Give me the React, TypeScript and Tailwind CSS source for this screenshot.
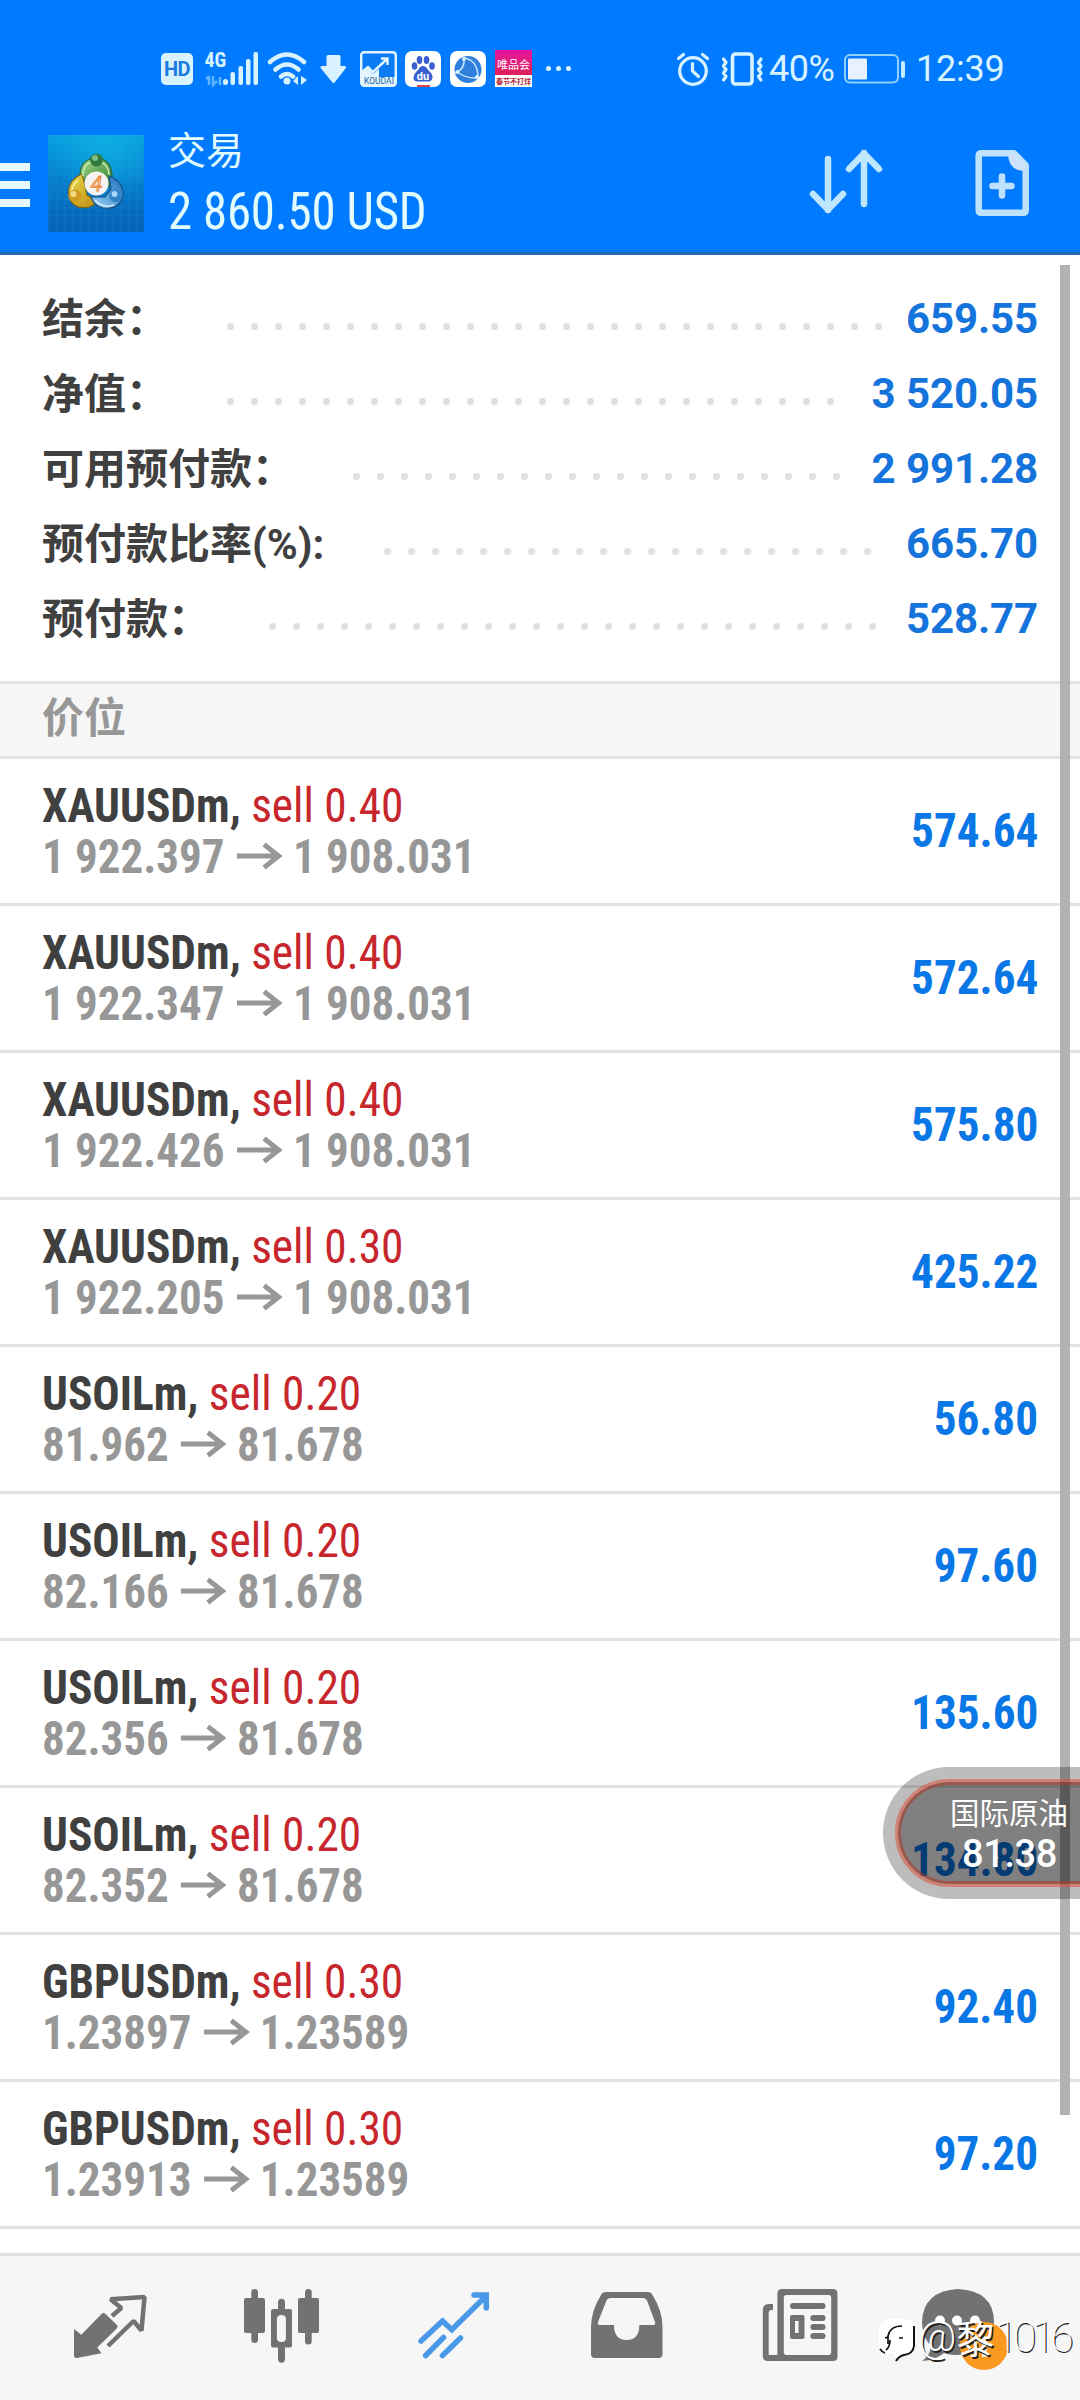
import type { ReactNode } from "react";

const summary = [
  { label: "结余：", value: "659.55", dots: 28, labelClass: "w-[185px]" },
  { label: "净值：", value: "3 520.05", dots: 26, labelClass: "w-[185px]" },
  { label: "可用预付款：", value: "2 991.28", dots: 21, labelClass: "w-[311px]" },
  { label: "预付款比率(%):", value: "665.70", dots: 21, labelClass: "w-[342px]" },
  { label: "预付款：", value: "528.77", dots: 26, labelClass: "w-[227px]" },
];

const positions = [
  { symbol: "XAUUSDm", volume: "0.40", open: "1 922.397", current: "1 908.031", profit: "574.64" },
  { symbol: "XAUUSDm", volume: "0.40", open: "1 922.347", current: "1 908.031", profit: "572.64" },
  { symbol: "XAUUSDm", volume: "0.40", open: "1 922.426", current: "1 908.031", profit: "575.80" },
  { symbol: "XAUUSDm", volume: "0.30", open: "1 922.205", current: "1 908.031", profit: "425.22" },
  { symbol: "USOILm", volume: "0.20", open: "81.962", current: "81.678", profit: "56.80" },
  { symbol: "USOILm", volume: "0.20", open: "82.166", current: "81.678", profit: "97.60" },
  { symbol: "USOILm", volume: "0.20", open: "82.356", current: "81.678", profit: "135.60" },
  { symbol: "USOILm", volume: "0.20", open: "82.352", current: "81.678", profit: "134.80" },
  { symbol: "GBPUSDm", volume: "0.30", open: "1.23897", current: "1.23589", profit: "92.40" },
  { symbol: "GBPUSDm", volume: "0.30", open: "1.23913", current: "1.23589", profit: "97.20" },
];

function StatusBar() {
  return (
    <div className="flex h-[41px] items-center text-[#d8f3ff]">
      <div className="ml-[161px] flex h-[32px] w-[32px] items-center justify-center rounded-[5px] bg-[#d8f3ff] font-[Roboto] text-[20px] leading-[24px] font-bold tracking-[-0.5px] text-[#1a7be0]">
        HD
      </div>
      <svg className="ml-[11px] overflow-visible" width="56" height="36" viewBox="204 50 56 36" fill="currentColor">
        <text x="204.500" y="66" fontSize="20" fontWeight="700" fontFamily="Roboto Condensed">4G</text>
        <path d="M209 75v9M206 78l3-3M213 75v9l4-4M220 76v8" stroke="#5cb4ff" strokeWidth="2.500" fill="none" />
        <rect x="223" y="78" width="5" height="6" rx="2.500" />
        <rect x="230.500" y="71" width="4.500" height="13" rx="2" />
        <rect x="238.500" y="65" width="4.500" height="19" rx="2" />
        <rect x="246" y="58" width="4.500" height="26" rx="2" />
        <rect x="253.500" y="51" width="4.500" height="33" rx="2" />
      </svg>
      <svg className="ml-[7px]" width="42" height="36" viewBox="267 50 42 36" fill="none" stroke="currentColor" strokeWidth="4.500" strokeLinecap="round">
        <path d="M270 61q17-15 34 0M275.500 68.500q11.500-10 23 0M281 75.500q6-5 12 0" />
        <circle cx="287" cy="80" r="3.500" fill="currentColor" stroke="none" />
        <path d="M293 80l5-5v9zM301 75v9l6-5z" fill="currentColor" stroke="none" />
      </svg>
      <svg className="ml-[10px]" width="28" height="32" viewBox="319 53 28 32" fill="currentColor">
        <path d="M328 55h11q1.500 0 1.500 1.500V66h4q2.500 0 1 2.500L335 82q-1.500 2-3 0L321 68.500q-1.500-2.500 1-2.500h4.500v-9.500q0-1.500 1.500-1.500z" />
      </svg>
      <svg className="ml-[13px]" width="37" height="36" viewBox="0 0 37 36">
        <rect x="1.200" y="1.200" width="34.600" height="33.600" rx="3" fill="#0b7cf5" stroke="#e3f6ff" strokeWidth="2.400" />
        <path d="M1 26h35v7q0 2-2 2H3q-2 0-2-2zM1 22l7-5 5 6 6-5v8H1z" fill="#e3f6ff" />
        <path d="M2 21l6-5 5 5L27 8M21 7.500h6.500V14" fill="none" stroke="#e3f6ff" strokeWidth="2.400" />
        <text x="19" y="33" fontSize="8.500" textAnchor="middle" fontFamily="Roboto" fill="#24659e">KOUDAI</text>
      </svg>
      <svg className="ml-[8px]" width="36" height="36" viewBox="0 0 36 36">
        <rect width="36" height="36" rx="7" fill="#fff" />
        <g fill="#3a5fd0">
          <ellipse cx="9.500" cy="15" rx="2.800" ry="3.800" />
          <ellipse cx="14.500" cy="9" rx="2.800" ry="4" />
          <ellipse cx="21.500" cy="9" rx="2.800" ry="4" />
          <ellipse cx="27" cy="15" rx="2.800" ry="3.800" />
          <path d="M18 15q3 0 5 4 5 4 4.500 8-1 4-5 3.500h-9Q9 31 8.500 27q0-4 4.500-8 2-4 5-4z" />
        </g>
        <text x="18" y="28.500" fontSize="11" fontWeight="700" textAnchor="middle" fontFamily="Roboto" fill="#fff">du</text>
        <rect x="12" y="34" width="13" height="2" fill="#d44" />
      </svg>
      <svg className="ml-[9px]" width="36" height="36" viewBox="0 0 36 36" fill="none">
        <rect width="36" height="36" rx="7" fill="#fff" />
        <circle cx="18" cy="18.500" r="13.500" fill="#2f7fdc" />
        <path d="M14 7q1 12-9 15M14 7q14 2 14 20M6 20q10 8 22 7" stroke="#bfe0ff" strokeWidth="1.500" />
        <circle cx="14" cy="8" r="2" fill="#d8ecff" />
        <circle cx="7.500" cy="21" r="2" fill="#d8ecff" />
        <circle cx="27" cy="26" r="2" fill="#d8ecff" />
      </svg>
      <div className="ml-[9px] flex h-[37px] w-[37px] flex-col items-center bg-gradient-to-b from-[#e6109c] to-[#dc1c2c] font-['Noto_Sans_CJK_SC',sans-serif]">
        <span className="mt-[6px] text-[11px] leading-[17px] text-white">唯品会</span>
        <span className="mt-[2px] flex h-[12px] w-full items-center justify-center bg-white text-[7px] leading-[12px] font-bold whitespace-nowrap text-[#b02030]">
          春节不打烊
        </span>
      </div>
      <div className="ml-[14px] flex gap-[5px]">
        <i className="h-[5px] w-[5px] rounded-full bg-current" />
        <i className="h-[5px] w-[5px] rounded-full bg-current" />
        <i className="h-[5px] w-[5px] rounded-full bg-current" />
      </div>
      <svg className="ml-[105px]" width="34" height="34" viewBox="0 0 34 34" fill="none" stroke="currentColor" strokeWidth="3.200" strokeLinecap="round">
        <circle cx="17" cy="19" r="13.300" />
        <path d="M16.500 11.500V19l6 5.500M2.500 6.500l5-4M31.500 6.500l-5-4" />
      </svg>
      <svg className="ml-[10px]" width="44" height="34" viewBox="0 0 44 34" fill="none" stroke="currentColor" strokeLinejoin="round" strokeLinecap="round">
        <rect x="12.500" y="2" width="19.500" height="30" rx="3" strokeWidth="3.600" />
        <path d="M3.500 7L6 10.500 3.500 14 6 17.500 3.500 21 6 24.500 3.500 28M41 7l-2.500 3.500L41 14l-2.500 3.500L41 21l-2.500 3.500L41 28" strokeWidth="3.200" />
      </svg>
      <span className="ml-[5px] w-[70px] font-[Roboto] text-[36px] leading-[44px] tracking-[-0.5px]">40%</span>
      <svg className="ml-[5px]" width="62" height="30" viewBox="0 0 62 30">
        <rect x="1" y="1" width="53" height="27.500" rx="5" fill="none" stroke="#8fd0ff" strokeWidth="2" />
        <rect x="4" y="4.500" width="19" height="21" rx="1" fill="#e8f1ff" />
        <rect x="57" y="7" width="4" height="17" rx="2" fill="#c8ecff" />
      </svg>
      <span className="ml-[10px] font-[Roboto] text-[36px] leading-[44px] tracking-[-0.2px]">12:39</span>
    </div>
  );
}

function AppLogo() {
  return (
    <svg className="ml-[18px]" width="96" height="97" viewBox="0 0 96 97">
      <defs>
        <linearGradient id="tile" x1="0" y1="0" x2="0" y2="1">
          <stop offset="0" stopColor="#06a0e0" />
          <stop offset="0.5" stopColor="#067ccb" />
          <stop offset="1" stopColor="#0562b4" />
        </linearGradient>
        <radialGradient id="tileGlow" cx="0.6" cy="0.1" r="0.6">
          <stop offset="0" stopColor="#10b4e4" stopOpacity="0.7" />
          <stop offset="1" stopColor="#10b4e4" stopOpacity="0" />
        </radialGradient>
        <pattern id="grid" width="8" height="8" patternUnits="userSpaceOnUse">
          <path d="M8 0H0V8" fill="none" stroke="#3fa6e0" strokeOpacity="0.2" />
        </pattern>
        <linearGradient id="green" x1="0" y1="0" x2="1" y2="1">
          <stop offset="0" stopColor="#a6d98a" />
          <stop offset="1" stopColor="#2c7c2e" />
        </linearGradient>
        <linearGradient id="gold" x1="0" y1="0" x2="1" y2="1">
          <stop offset="0" stopColor="#e8dc50" />
          <stop offset="1" stopColor="#c08a10" />
        </linearGradient>
        <linearGradient id="sky" x1="0" y1="1" x2="1" y2="0">
          <stop offset="0" stopColor="#9ad4f8" />
          <stop offset="1" stopColor="#1c6cb8" />
        </linearGradient>
      </defs>
      <rect width="96" height="97" fill="url(#tile)" />
      <rect width="96" height="97" fill="url(#tileGlow)" />
      <rect width="96" height="97" fill="url(#grid)" />
      <path d="M32 43Q31 24 48 23q16 1 16 19 0 6-3 10L54 40H41l-7 8z" fill="url(#green)" stroke="#1f6a3a" strokeWidth="1.200" />
      <path d="M34 39Q18 46 21 62q4 13 20 10 6-2 8-6l-10-6-3-14z" fill="url(#gold)" stroke="#80661a" strokeWidth="1.200" />
      <path d="M61 41q15 6 14 20-4 14-20 12-9-2-12-11h14l6-8z" fill="url(#sky)" stroke="#164f88" strokeWidth="1.200" />
      {/* light rims along each arm */}
      <path d="M35 41q0-14 13-15 12 1 13 14" fill="none" stroke="#c4ecb0" strokeWidth="1.600" />
      <path d="M30 45q-8 7-6 17" fill="none" stroke="#fbf2a0" strokeWidth="1.600" />
      <path d="M47 65q8 9 19 5" fill="none" stroke="#d4eeff" strokeWidth="1.600" />
      <circle cx="48.500" cy="25" r="6.500" fill="#2f7a42" />
      <circle cx="47" cy="23" r="3" fill="#7fbf88" />
      <circle cx="27" cy="61" r="6.500" fill="#cf9c20" />
      <circle cx="25.500" cy="59" r="3" fill="#f2dc84" />
      <circle cx="68" cy="61" r="6.500" fill="#2f84c8" />
      <circle cx="66.500" cy="59" r="3" fill="#a4d6f8" />
      <circle cx="48.500" cy="48.500" r="12" fill="#f6f4f2" />
      <text x="48.500" y="56" fontSize="21" fontStyle="italic" textAnchor="middle" fontFamily="Roboto" fill="#fbd3a8" stroke="#e88a3c" strokeWidth="0.900">4</text>
    </svg>
  );
}

function Header() {
  return (
    <header className="h-[255px] border-b-[3px] border-[#2368b0] bg-[#007bff] pt-[48px]">
      <StatusBar />
      <div className="flex h-[163px] items-start pt-[46px]">
        <div className="mt-[28px] flex w-[30px] flex-col gap-[10px]">
          <i className="h-[8px] bg-[#e6f8ff]" />
          <i className="h-[8px] bg-[#e6f8ff]" />
          <i className="h-[8px] bg-[#e6f8ff]" />
        </div>
        <AppLogo />
        <div className="-mt-[8px] ml-[24px] flex w-[640px] flex-col text-[#e2fbff]">
          <span className="font-['Noto_Sans_CJK_SC',sans-serif] text-[38px] leading-[42px]">交易</span>
          <span className="mt-[14px] origin-left scale-x-[0.94] font-['Roboto_Condensed',Roboto,sans-serif] text-[52px] leading-[58px] font-[450] tracking-[-0.2px]">
            2 860.50 USD
          </span>
        </div>
        <svg className="mt-[12px]" width="76" height="70" viewBox="808 148 76 70" fill="none" stroke="#bfe6ff" strokeWidth="6.500" strokeLinecap="round" strokeLinejoin="round">
          <path d="M828 160v51M813 195l15 15.500 15-15.500M864 205v-51M849 170l15-15.500L879 170" />
        </svg>
        <svg className="mt-[13px] ml-[89px]" width="58" height="70" viewBox="973 148 58 70" fill="none" stroke="#bfe2fc" strokeWidth="6.500" strokeLinecap="round" strokeLinejoin="round">
          <path d="M981 153.300h33l11.700 12v45q0 2.500-2.500 2.500h-42q-2.500 0-2.500-2.500v-54q0-3 2.300-3zM1002 176.500v19M992.500 186h19" />
          <path d="M1008 153q0 18 17 18v-6l-11-12z" fill="#cfe2fc" stroke="none" />
        </svg>
      </div>
    </header>
  );
}

function Summary() {
  return (
    <section className="h-[426px] px-[42px] pt-[26px]">
      {summary.map((row) => (
        <div key={row.label} className="flex h-[75px] items-center">
          <span className={`${row.labelClass} mt-[2px] shrink-0 font-[Roboto,'Noto_Sans_CJK_SC',sans-serif] text-[42px] leading-[60px] font-bold whitespace-nowrap text-[#404040]`}>
            {row.label}
          </span>
          <span className="mt-[15px] flex gap-[17px]">
            {Array.from({ length: row.dots }, (_, i) => (
              <i key={i} className="h-[7px] w-[7px] rounded-full bg-[#e0e0e0]" />
            ))}
          </span>
          <span className="mt-px ml-auto font-[Roboto] text-[42px] leading-[60px] font-bold tracking-[-0.1px] text-[#1573dc]">{row.value}</span>
        </div>
      ))}
    </section>
  );
}

function Positions() {
  return (
    <section className="h-[1572px] font-['Roboto_Condensed',Roboto,sans-serif] text-[48px] leading-[51px]">
      <h2 className="h-[78px] border-y-[3px] border-[#e2e2e2] bg-[#f6f6f6] pl-[42px] font-['Noto_Sans_CJK_SC',sans-serif] text-[42px] leading-[62px] font-bold text-[#979797]">
        价位
      </h2>
      {positions.map((p) => (
        <div key={p.open} className="flex h-[147px] items-center justify-between border-b-[3px] border-[#e2e2e2] px-[42px]">
          <div className="pb-[1px]">
            <p className="origin-left scale-x-[0.945]">
              <span className="font-bold text-[#404040]">{p.symbol},</span> <span className="font-[450] text-[#c6262c]">sell {p.volume}</span>
            </p>
            <p className="flex origin-left scale-x-[0.937] items-center font-bold text-[#979797]">
              {p.open}
              <svg className="mr-[11px] ml-[13px]" width="49" height="28" viewBox="0 0 49 28" fill="none" stroke="currentColor" strokeWidth="5.200">
                <path d="M0 14h45M29 2.500l15.500 11.500L29 25.500" />
              </svg>
              {p.current}
            </p>
          </div>
          <span className="origin-right scale-x-[0.94] pb-[1px] font-bold text-[#0a77e6]">{p.profit}</span>
        </div>
      ))}
    </section>
  );
}

function NavItem({ active, children }: { active?: boolean; children: ReactNode }) {
  return (
    <button className={`flex w-[172px] justify-center ${active ? "text-[#4a98e8]" : "text-[#727272]"}`}>
      <svg width="96" height="96" viewBox="0 0 96 96" fill="currentColor" className="overflow-visible">
        {children}
      </svg>
    </button>
  );
}

function BottomNav() {
  return (
    <nav className="flex h-[147px] border-t-[3px] border-[#dedede] bg-[#f6f6f6] px-[24px] pt-[21px]">
      <NavItem>
        <path d="M12 52l7.300 5.700L39.500 37q2-2 4 0l11 10.500q2 2.200 0 4.200L35.300 70.500l4.200 5.800L15 81q-3 .4-3-2.500z" />
        <path d="M50 39l9.300-8-10.800-8.800L82.500 20l-3 33.500L71.600 44 46 69" fill="none" stroke="currentColor" strokeWidth="4.500" strokeLinejoin="bevel" />
      </NavItem>
      <NavItem>
        <rect x="10" y="21" width="21" height="35" rx="2" />
        <rect x="17.300" y="12" width="6.700" height="54" rx="3.300" />
        <path fillRule="evenodd" d="M39 32h17q2 0 2 2v34.500q0 2-2 2H39q-2 0-2-2V34q0-2 2-2zm8.500 6q-4.600 0-4.600 4v19q0 4 4.600 4t4.400-4V42q0-4-4.400-4z" />
        <path d="M44 35V25.500q0-3.700 3.500-3.700T51 25.500V35zM44 69v13q0 3.700 3.500 3.700T51 82V69z" />
        <rect x="64" y="21" width="21" height="35" rx="2" />
        <rect x="71" y="12" width="6.700" height="55.500" rx="3.300" />
      </NavItem>
      <NavItem active>
        <path d="M15 64l21.500-20 9.300 8.700L80 19M68 18h12.300v13M19.600 78.500l17.900-18M36.500 78.500l18-17.500" fill="none" stroke="currentColor" strokeWidth="5.500" strokeLinecap="round" />
      </NavItem>
      <NavItem>
        <path fillRule="evenodd" d="M28 15h42q3 0 4.500 3 10 16 10 32v27q0 4-4 4H17q-4 0-4-4V50q0-16 10-32 1.500-3 5-3zm4 6q-2.500 0-3.500 2.500L20 45q-1 3 2 3h14q0 15 12.700 15T61.300 48H75q3 0 2-3l-8-21.500q-1-2.500-3.500-2.500z" />
      </NavItem>
      <NavItem>
        <path fillRule="evenodd" d="M32 12h51q4.500 0 4.500 4.500v63q0 4.500-4.500 4.500H18q-5.200 0-5.200-5V33q0-6 6-6H23v6h-2q-2.300 0-2.300 2.500V78h8.700V16.500Q27.400 12 32 12zm4.500 6q-2.700 0-2.700 2.700v54.600q0 2.700 2.700 2.700h42q2.700 0 2.700-2.700V20.700q0-2.700-2.700-2.700z" />
        <rect x="40" y="26" width="35.500" height="6" rx="3" />
        <path fillRule="evenodd" d="M42 38h10.500q2 0 2 2v20q0 2-2 2H42q-2 0-2-2V40q0-2 2-2zm3 6v12h3.600V44z" />
        <rect x="60.300" y="38" width="15.200" height="6" rx="3" />
        <rect x="60.300" y="47" width="15.200" height="6" rx="3" />
        <rect x="60.300" y="56" width="15.200" height="6" rx="3" />
      </NavItem>
      <NavItem>
        <path d="M36 12q36 2 36 33-1 30-36 33-9 0-14-2-8 7-22 8 8-5 9-15Q0 60 0 45 1 14 36 12z" />
        <circle cx="18" cy="43.500" r="5" fill="#fff" />
        <circle cx="35" cy="43.500" r="5" fill="#fff" />
        <circle cx="53" cy="43.500" r="5" fill="#fff" />
        <circle cx="62" cy="69" r="24" fill="#fb9a20" />
        <rect x="60" y="60" width="4.500" height="20" fill="#fff" />
      </NavItem>
    </nav>
  );
}

function PriceBubble() {
  return (
    <div className="absolute top-[1767px] left-[883px] h-[132px] w-[260px] rounded-full bg-black/26 p-[12px]">
      <div className="h-[108px] rounded-full border-[3px] border-[#e0523a]/55">
        <div className="h-[102px] rounded-full border-[3px] border-[#a83a2a]/60 bg-black/32 pt-[6px] text-white">
          <p className="pl-[49px] font-['Noto_Sans_CJK_SC',sans-serif] text-[29.5px] leading-[40px]">国际原油</p>
          <p className="pl-[61px] font-[Roboto] text-[38px] leading-[46px] font-[460] tracking-[-0.4px]">81.38</p>
        </div>
      </div>
    </div>
  );
}

function Watermark() {
  return (
    <div className="absolute top-[2311px] left-[876px] flex items-center">
      <svg width="42" height="50" viewBox="0 0 42 50">
        <path d="M12 7h18q9 1 9 10v16q-1 8-9 9l-9 6-4-6Q4 41 3 33V17Q3 8 12 7z" fill="#fff" />
        <path d="M4 37q2 3 5 4M12 32V24q2-10 14-10M9 26l3-1M10 38q4-3 4-10M23 26h4" fill="none" stroke="#111" strokeWidth="1.700" />
        <path d="M38 14v20q-1 8-10 9-5 1-8 6" fill="none" stroke="#111" strokeWidth="2" />
      </svg>
      <span className="flex items-center text-white [text-shadow:1.5px_1.5px_0.5px_#222]">
        <span className="font-[Roboto] text-[42px] leading-[52px] font-light">@</span>
        <span className="font-['Noto_Sans_CJK_SC',sans-serif] text-[38px] leading-[52px]">黎</span>
        <span className="font-[Roboto] text-[42px] leading-[52px] font-thin tracking-[-4.4px]">1016</span>
      </span>
    </div>
  );
}

export default function App() {
  return (
    <div className="relative h-[2400px] w-[1080px] overflow-hidden bg-white">
      <Header />
      <Summary />
      <Positions />
      <BottomNav />
      <div className="absolute top-[265px] left-[1060px] h-[1850px] w-[10px] bg-[#b2b2b2]" />
      <PriceBubble />
      <Watermark />
    </div>
  );
}
